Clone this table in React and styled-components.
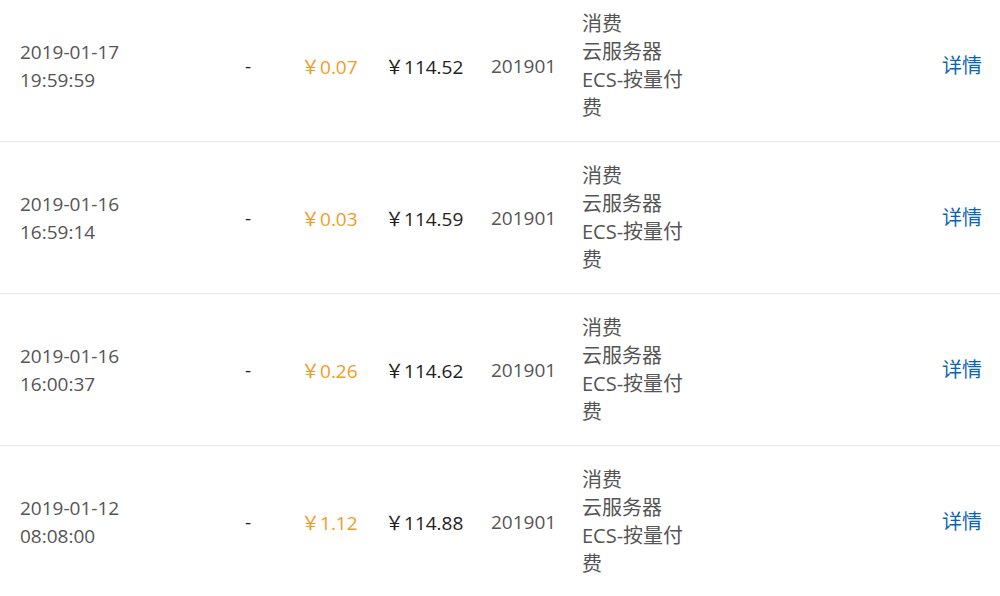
import React from "react";
import styled, { createGlobalStyle } from "styled-components";

const GlobalStyle = createGlobalStyle`
  html, body {
    margin: 0;
    padding: 0;
    background: #fff;
    overflow: hidden;
  }
  body {
    font-family: "Open Sans", "Noto Sans CJK SC", sans-serif;
  }
`;

const Table = styled.div`
  width: 1000px;
  margin-top: -10px;
`;

const Row = styled.div`
  display: grid;
  grid-template-columns: 225px 59px 84px 103px 91px 108px 1fr;
  align-items: center;
  padding: 20px 18px 19px 20px;
  border-bottom: 1px solid #e4e6e9;
  font-size: 19px;
  line-height: 28px;
`;

const Cell = styled.div`
  color: ${(p) => p.color || "#555"};
  white-space: nowrap;
`;

const Yen = styled.span`
  font-family: "Noto Sans CJK SC", sans-serif;
  font-size: 19px;
  margin-left: -3px;
`;

const Desc = styled.div`
  color: #555;
  width: 106px;
  font-size: 20px;
  word-break: break-all;
`;

const Link = styled.a`
  color: #0a64b8;
  font-size: 20px;
  text-decoration: none;
  justify-self: end;
  cursor: pointer;
`;

const rows = [
  { date: "2019-01-17", time: "19:59:59", amount: "0.07", balance: "114.52" },
  { date: "2019-01-16", time: "16:59:14", amount: "0.03", balance: "114.59" },
  { date: "2019-01-16", time: "16:00:37", amount: "0.26", balance: "114.62" },
  { date: "2019-01-12", time: "08:08:00", amount: "1.12", balance: "114.88" },
];

export default function App() {
  return (
    <>
      <GlobalStyle />
      <Table>
        {rows.map((r, i) => (
          <Row key={i}>
            <Cell>
              {r.date}
              <br />
              {r.time}
            </Cell>
            <Cell color="#222">-</Cell>
            <Cell color="#f29c1f">
              <Yen>￥</Yen>
              {r.amount}
            </Cell>
            <Cell color="#222">
              <Yen>￥</Yen>
              {r.balance}
            </Cell>
            <Cell>201901</Cell>
            <Desc>
              消费
              <br />
              云服务器
              <br />
              ECS-按量付费
            </Desc>
            <Link>详情</Link>
          </Row>
        ))}
      </Table>
    </>
  );
}
